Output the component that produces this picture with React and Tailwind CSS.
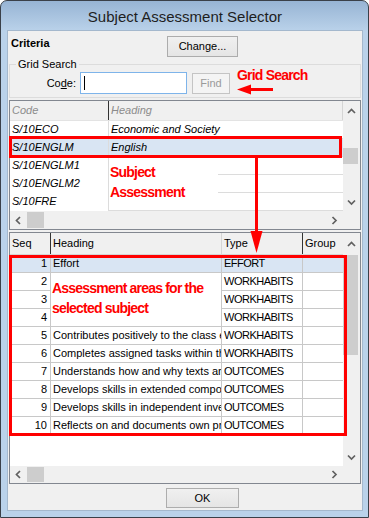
import React from 'react'

const subjects = [
  { code: 'S/10ECO', heading: 'Economic and Society' },
  { code: 'S/10ENGLM', heading: 'English', active: true },
  { code: 'S/10ENGLM1', heading: '' },
  { code: 'S/10ENGLM2', heading: '' },
  { code: 'S/10FRE', heading: '' },
]

const areas = [
  { seq: 1, heading: 'Effort', type: 'EFFORT', active: true },
  { seq: 2, heading: '', type: 'WORKHABITS' },
  { seq: 3, heading: '', type: 'WORKHABITS' },
  { seq: 4, heading: '', type: 'WORKHABITS' },
  { seq: 5, heading: 'Contributes positively to the class e', type: 'WORKHABITS' },
  { seq: 6, heading: 'Completes assigned tasks within the', type: 'WORKHABITS' },
  { seq: 7, heading: 'Understands how and why texts are', type: 'OUTCOMES' },
  { seq: 8, heading: 'Develops skills in extended composi', type: 'OUTCOMES' },
  { seq: 9, heading: 'Develops skills in independent inves', type: 'OUTCOMES' },
  { seq: 10, heading: 'Reflects on and documents own pro', type: 'OUTCOMES' },
]

function Chevron({ dir }) {
  if (dir === 'up' || dir === 'down') {
    const pts = dir === 'up' ? '1,5 4.5,1.5 8,5' : '1,1.5 4.5,5 8,1.5'
    return (
      <svg width="9" height="7" viewBox="0 0 9 7">
        <polyline points={pts} fill="none" stroke="#606060" strokeWidth="1.7" />
      </svg>
    )
  }
  const pts = dir === 'left' ? '5,1 1.5,4.5 5,8' : '1.5,1 5,4.5 1.5,8'
  return (
    <svg width="7" height="9" viewBox="0 0 7 9">
      <polyline points={pts} fill="none" stroke="#606060" strokeWidth="1.7" />
    </svg>
  )
}

function HScroll({ h }) {
  return (
    <div className={`flex items-stretch bg-[#f0f0f0] ${h}`}>
      <div className="w-[17px] flex items-center justify-center"><Chevron dir="left" /></div>
      <div className="w-[17px] bg-[#cdcdcd] my-[1px]" />
      <div className="flex-1" />
      <div className="w-[17px] flex items-center justify-center"><Chevron dir="right" /></div>
    </div>
  )
}

function VScroll({ upH, thumbTop, thumbH, cornerH }) {
  return (
    <div className="w-[17px] flex flex-col bg-[#f0f0f0]">
      <div className={`flex items-center justify-center ${upH}`}><Chevron dir="up" /></div>
      <div className="flex-1 relative">
        <div className={`absolute left-0 w-[15px] bg-[#cdcdcd] ${thumbTop} ${thumbH}`} />
      </div>
      <div className="h-[17px] flex items-center justify-center"><Chevron dir="down" /></div>
      <div className={cornerH} />
    </div>
  )
}

export default function App() {
  return (
    <div className="relative w-[369px] h-[518px] overflow-hidden bg-white font-['Liberation_Sans',Arial,sans-serif] text-[11px] text-black">
      <div className="flex flex-col w-full h-full rounded-t-[7px] border border-[#3a4049] bg-[linear-gradient(180deg,#97b4d4_0px,#bad2ea_30px,#bad2ea_100%)] pl-[6px] pr-[5px] pb-[6px]">
        {/* title */}
        <div className="h-[29px] flex items-center justify-center text-[15px] text-[#1e1e1e] pt-[3px]">
          Subject Assessment Selector
        </div>

        {/* client area */}
        <div className="flex-1 flex flex-col border border-[#a4b8cd] bg-[#f0f0f0] px-[1px]">
          <div className="h-[26px] flex items-start px-[2px]">
            <span className="w-[156px] mt-[6px] leading-[13px] font-bold">Criteria</span>
            <button className="w-[71px] h-[21px] mt-[5px] border border-[#acacac] bg-[linear-gradient(180deg,#f0f0f0,#e5e5e5)] text-[11px] leading-[19px]">
              Change...
            </button>
          </div>

          {/* Grid Search group */}
          <div className="relative mt-[7px] h-[34px] border border-[#dcdcdc]">
            <span className="absolute left-[6px] top-[-8px] px-[2px] bg-[#f0f0f0] leading-[14px]">Grid Search</span>
            <div className="flex items-start pt-[7px]">
              <span className="w-[66px] h-[22px] leading-[22px] text-right">
                Co<span className="underline">d</span>e:
              </span>
              <div className="relative ml-[4px] w-[107px] h-[22px] border border-[#7eb4ea] bg-white">
                <div className="absolute left-[3px] top-[3px] w-[1px] h-[14px] bg-black" />
              </div>
              <button className="ml-[5px] mt-[1px] w-[38px] h-[21px] border border-[#c4c4c4] bg-[#f4f4f4] text-[#9a9a9a] text-[11px] leading-[19px]">
                Find
              </button>
            </div>
          </div>

          {/* Subject grid */}
          <div className="mt-[2px] h-[130px] flex border border-[#828790] bg-white">
            <div className="w-[333px] flex flex-col">
              <div className="h-[20px] flex bg-[#f0f0f0] border-b border-[#e3e3e3] italic text-[#8c8c8c]">
                <div className="w-[99px] border-r border-[#333] pl-[2px] leading-[19px]">Code</div>
                <div className="flex-1 border-r border-[#d5d5d5] pl-[2px] leading-[19px]">Heading</div>
              </div>
              {subjects.map((s) => (
                <div key={s.code} className={`h-[18px] flex italic ${s.active ? 'bg-[#d9e5f3]' : ''}`}>
                  <div className="w-[99px] border-r border-[#dcdcdc] pl-[2px] leading-[17px] whitespace-nowrap">{s.code}</div>
                  <div className="flex-1 border-b border-[#dcdcdc] pl-[2px] leading-[17px] whitespace-nowrap">{s.heading}</div>
                </div>
              ))}
              <HScroll h="h-[18px]" />
            </div>
            <VScroll upH="h-[20px]" thumbTop="top-[27px]" thumbH="h-[16px]" cornerH="h-[18px]" />
          </div>

          {/* Assessment grid */}
          <div className="mt-[2px] h-[252px] flex border border-[#828790] bg-white">
            <div className="w-[333px] flex flex-col">
              <div className="h-[22px] flex bg-[#f0f0f0] border-b border-[#d5d5d5]">
                <div className="w-[41px] border-r border-[#333] pl-[2px] leading-[21px]">Seq</div>
                <div className="w-[171px] border-r border-[#d5d5d5] pl-[2px] leading-[21px]">Heading</div>
                <div className="w-[81px] border-r border-[#333] pl-[2px] leading-[21px]">Type</div>
                <div className="flex-1 pl-[2px] leading-[21px]">Group</div>
              </div>
              {areas.map((a) => (
                <div key={a.seq} className={`h-[18px] flex border-b border-[#c8c8c8] ${a.active ? 'bg-[#d9e5f3]' : ''}`}>
                  <div className="w-[41px] border-r border-[#c8c8c8] pr-[3px] text-right leading-[17px]">{a.seq}</div>
                  <div className="w-[171px] border-r border-[#c8c8c8] pl-[2px] leading-[17px] whitespace-nowrap overflow-hidden">{a.heading}</div>
                  <div className="w-[81px] border-r border-[#c8c8c8] pl-[2px] leading-[17px] whitespace-nowrap overflow-hidden tracking-[-0.5px]">{a.type}</div>
                  <div className="flex-1" />
                </div>
              ))}
              <div className="flex-1" />
              <HScroll h="h-[17px]" />
            </div>
            <VScroll upH="h-[22px]" thumbTop="top-0" thumbH="h-[100px]" cornerH="h-[17px]" />
          </div>

          <button className="mt-[4px] ml-[157px] w-[73px] h-[20px] border border-[#adadad] bg-[linear-gradient(180deg,#f0f0f0,#e5e5e5)] text-[11px] leading-[18px]">
            OK
          </button>
        </div>
      </div>

      {/* annotations */}
      <div className="absolute left-[237px] top-[66px] text-[14px] font-bold text-[#f00] tracking-[-0.8px] leading-[18px]">Grid Search</div>
      <svg className="absolute left-0 top-0" width="369" height="518" viewBox="0 0 369 518">
        <polygon points="237,89.5 251,84.5 251,94.5" fill="#f00" />
        <rect x="250" y="88" width="23" height="3" fill="#f00" />
        <rect x="255" y="157" width="3" height="76" fill="#f00" />
        <polygon points="250.5,231 262.5,231 256.5,253" fill="#f00" />
      </svg>
      <div className="absolute left-[9px] top-[136px] w-[333px] h-[22px] border-[3px] border-[#f00]" />
      <div className="absolute left-[109px] top-[158px] w-[109px] h-[52px] bg-white pl-[1px] pt-[4px] text-[14px] font-bold text-[#f00] tracking-[-0.8px] leading-[20px]">
        <div>Subject</div>
        <div>Assessment</div>
      </div>
      <div className="absolute left-[51px] top-[274px] w-[170px] h-[52px] bg-white pl-[1px] pt-[4px] text-[14px] font-bold text-[#f00] tracking-[-0.8px] leading-[20px]">
        <div>Assessment areas for the</div>
        <div>selected subject</div>
      </div>
      <div className="absolute left-[9px] top-[255px] w-[338px] h-[181px] border-[3px] border-[#f00]" />
    </div>
  )
}
